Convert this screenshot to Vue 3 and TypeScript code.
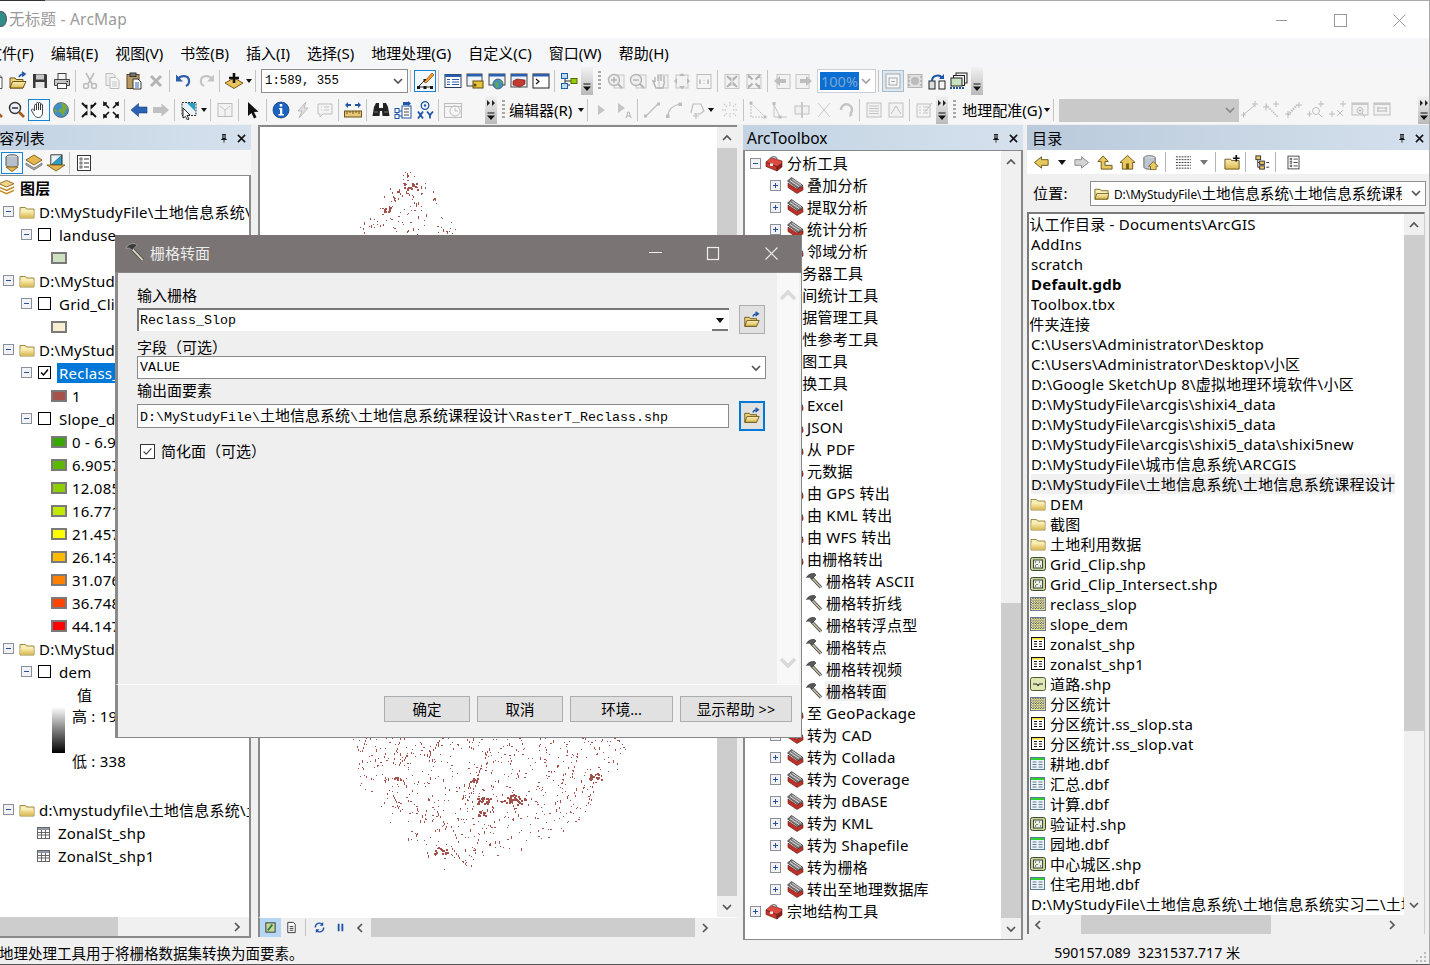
<script setup lang="ts">
type Tok = { k: string; n?: string; w?: number }
const parse = (s: string): Tok[] =>
  s.split(' ').map((t) => {
    if (t === '-') return { k: 'sep' }
    if (t === 'v') return { k: 'arr' }
    if (t === 'H') return { k: 'handle' }
    if (t === 'H2') return { k: 'handle2' }
    if (t === 'G') return { k: 'grip' }
    if (t === 'S') return { k: 'scale' }
    if (t === 'P') return { k: 'pct' }
    if (t === 'E') return { k: 'txt', n: '编辑器(R)' }
    if (t === 'R') return { k: 'txt', n: '地理配准(G)' }
    if (t === 'C') return { k: 'gcombo' }
    if (t[0] === '_') return { k: 'sp', w: Number(t.slice(1)) }
    if (t[0] === '*') return { k: 'hot', n: t.slice(1) }
    if (t[0] === '^') return { k: 'hot2', n: t.slice(1) }
    return { k: 'ic', n: t }
  })

const tb1 = parse('newdoc open save print - cut copy paste del - undo redo - add v - S - *editn - tblwin keywin globewin boxwin cmdwin - model H G dzin dzout dhand dfull d11 - dfin dfout - dback dfwd P - ^dpage dsnap dlink dmulti H')
const tb2 = parse('zin zout *hand globe - fin fout - back fwd - selfeat v - clrsel - pointer - info flash speech - measure - binoc route xy - time _20 H2 G E _4 v - sa sb - la lb lc v _4 ld - ma mb mc md me - ta tb - tc H2 G _2 R v - C ga gb gc gd ge gf gg _24 H2')

const menus = ['文件(F)', '编辑(E)', '视图(V)', '书签(B)', '插入(I)', '选择(S)', '地理处理(G)', '自定义(C)', '窗口(W)', '帮助(H)']

type Toc = { x: string; text?: string; color?: string; on?: boolean; sel?: boolean }
const tocRows: Toc[] = [
  { x: 'root', text: '图层' },
  { x: 'grp', text: 'D:\\MyStudyFile\\土地信息系统\\土地信息系统课程设计' },
  { x: 'lyr', text: 'landuse' },
  { x: 'sw', color: '#cfe2c0' },
  { x: 'grp', text: 'D:\\MyStudyFile\\土地信息系统' },
  { x: 'lyr', text: 'Grid_Clip' },
  { x: 'sw', color: '#f7efcf' },
  { x: 'grp', text: 'D:\\MyStudyFile\\土地信息系统' },
  { x: 'lyr', text: 'Reclass_Slop', on: true, sel: true },
  { x: 'sw', color: '#a5524b', text: '1' },
  { x: 'lyr', text: 'Slope_dem' },
  { x: 'sw', color: '#38a800', text: '0 - 6.905' },
  { x: 'sw', color: '#5cb800', text: '6.9057 - 12.08' },
  { x: 'sw', color: '#8fd100', text: '12.085 - 16.77' },
  { x: 'sw', color: '#c4e800', text: '16.771 - 21.45' },
  { x: 'sw', color: '#ffff00', text: '21.457 - 26.14' },
  { x: 'sw', color: '#ffbb00', text: '26.143 - 31.07' },
  { x: 'sw', color: '#ff8000', text: '31.076 - 36.74' },
  { x: 'sw', color: '#ff4400', text: '36.748 - 44.14' },
  { x: 'sw', color: '#ff0000', text: '44.147 - 78.9' },
  { x: 'grp', text: 'D:\\MyStudyFile\\土地信息系统' },
  { x: 'lyr', text: 'dem' },
  { x: 'val', text: '值' },
  { x: 'ramp' },
  { x: 'blank' },
  { x: 'grp', text: 'd:\\mystudyfile\\土地信息系统\\土地信息系统课程设计' },
  { x: 'tbl', text: 'ZonalSt_shp' },
  { x: 'tbl', text: 'ZonalSt_shp1' },
]

type Tool = { l: number; e?: string; i?: string; text: string; hl?: boolean }
const tools: Tool[] = [
  { l: 0, e: 'minus', i: 'tbox', text: '分析工具' },
  { l: 1, e: 'plus', i: 'tset', text: '叠加分析' },
  { l: 1, e: 'plus', i: 'tset', text: '提取分析' },
  { l: 1, e: 'plus', i: 'tset', text: '统计分析' },
  { l: 1, e: 'plus', i: 'tset', text: '邻域分析' },
  { l: 0, e: 'plus', i: 'tbox', text: '服务器工具' },
  { l: 0, e: 'plus', i: 'tbox', text: '空间统计工具' },
  { l: 0, e: 'plus', i: 'tbox', text: '数据管理工具' },
  { l: 0, e: 'plus', i: 'tbox', text: '线性参考工具' },
  { l: 0, e: 'plus', i: 'tbox', text: '制图工具' },
  { l: 0, e: 'minus', i: 'tbox', text: '转换工具' },
  ...['Excel', 'JSON', '从 PDF', '元数据', '由 GPS 转出', '由 KML 转出', '由 WFS 转出', '由栅格转出'].map((text) => ({ l: 1, e: 'plus', i: 'tset', text })),
  ...['栅格转 ASCII', '栅格转折线', '栅格转浮点型', '栅格转点', '栅格转视频'].map((text) => ({ l: 2, i: 'hammer', text })),
  { l: 2, i: 'hammer', text: '栅格转面', hl: true },
  ...['至 GeoPackage', '转为 CAD', '转为 Collada', '转为 Coverage', '转为 dBASE', '转为 KML', '转为 Shapefile', '转为栅格', '转出至地理数据库'].map((text) => ({ l: 1, e: 'plus', i: 'tset', text })),
  { l: 0, e: 'plus', i: 'tbox', text: '宗地结构工具' },
]

type Cat = { i?: string; text: string; clip?: boolean; bold?: boolean; hl?: boolean }
const cats: Cat[] = [
  { text: '默认工作目录 - Documents\\ArcGIS', clip: true },
  { text: 'AddIns' },
  { text: 'scratch' },
  { text: 'Default.gdb', bold: true },
  { text: 'Toolbox.tbx' },
  { text: '文件夹连接', clip: true },
  { text: 'C:\\Users\\Administrator\\Desktop' },
  { text: 'C:\\Users\\Administrator\\Desktop\\小区' },
  { text: 'D:\\Google SketchUp 8\\虚拟地理环境软件\\小区' },
  { text: 'D:\\MyStudyFile\\arcgis\\shixi4_data' },
  { text: 'D:\\MyStudyFile\\arcgis\\shixi5_data' },
  { text: 'D:\\MyStudyFile\\arcgis\\shixi5_data\\shixi5new' },
  { text: 'D:\\MyStudyFile\\城市信息系统\\ARCGIS' },
  { text: 'D:\\MyStudyFile\\土地信息系统\\土地信息系统课程设计', hl: true },
  { i: 'folder', text: 'DEM' },
  { i: 'folder', text: '截图' },
  { i: 'folder', text: '土地利用数据' },
  { i: 'shp', text: 'Grid_Clip.shp' },
  { i: 'shp', text: 'Grid_Clip_Intersect.shp' },
  { i: 'rast', text: 'reclass_slop' },
  { i: 'rast', text: 'slope_dem' },
  { i: 'tyel', text: 'zonalst_shp' },
  { i: 'tyel', text: 'zonalst_shp1' },
  { i: 'lshp', text: '道路.shp' },
  { i: 'rast', text: '分区统计' },
  { i: 'tyel', text: '分区统计.ss_slop.sta' },
  { i: 'tyel', text: '分区统计.ss_slop.vat' },
  { i: 'tgrn', text: '耕地.dbf' },
  { i: 'tgrn', text: '汇总.dbf' },
  { i: 'tgrn', text: '计算.dbf' },
  { i: 'shp', text: '验证村.shp' },
  { i: 'tgrn', text: '园地.dbf' },
  { i: 'shp', text: '中心城区.shp' },
  { i: 'tgrn', text: '住宅用地.dbf' },
  { text: 'D:\\MyStudyFile\\土地信息系统\\土地信息系统实习二\\土地利用数据' },
]

const catTools = parse('cback v cfwd cup chome cdb - cgrid vg - cfadd - ctree - copts')

function rng(seed: number) {
  return () => {
    seed = (seed + 0x6d2b79f5) | 0
    let t = Math.imul(seed ^ (seed >>> 15), 1 | seed)
    t = (t + Math.imul(t ^ (t >>> 7), 61 | t)) ^ t
    return ((t ^ (t >>> 14)) >>> 0) / 4294967296
  }
}
function inside(p: number[][], x: number, y: number) {
  let c = false
  for (let i = 0, j = p.length - 1; i < p.length; j = i++) {
    if (p[i][1] > y !== p[j][1] > y && x < ((p[j][0] - p[i][0]) * (y - p[i][1])) / (p[j][1] - p[i][1]) + p[i][0]) c = !c
  }
  return c
}
const r = rng(20240611)
let dots = ''
const dot = (x: number, y: number, w: number, h: number) => {
  dots += `M${Math.round(x)} ${Math.round(y)}h${w}v${h}h-${w}z`
}
function scatter(poly: number[][], n: number, streaks: number) {
  const xs = poly.map((q) => q[0])
  const ys = poly.map((q) => q[1])
  const x0 = Math.min(...xs), x1 = Math.max(...xs), y0 = Math.min(...ys), y1 = Math.max(...ys)
  const pick = () => {
    for (;;) {
      const x = x0 + r() * (x1 - x0)
      const y = y0 + r() * (y1 - y0)
      if (inside(poly, x, y)) return [x, y]
    }
  }
  for (let c = 0; c < n; c++) {
    const [x, y] = pick()
    const s = r()
    dot(x, y, s > 0.88 ? 2 : 1, s < 0.08 ? 3 : s < 0.22 ? 2 : 1)
  }
  for (let c = 0; c < streaks; c++) {
    const [x, y] = pick()
    const len = 3 + Math.floor(r() * 7)
    const dx = (r() < 0.7 ? 1 : -1) * (0.6 + r() * 1.4)
    const dy = 1.6 + r() * 2.4
    for (let k = 0; k < len; k++) {
      if (r() < 0.2) continue
      const px = x + dx * k, py = y - k * dy
      if (inside(poly, px, py)) dot(px, py, 1, 2)
    }
  }
}
scatter([[410, 168], [425, 178], [445, 205], [458, 235], [355, 235], [375, 205], [395, 180]], 105, 3)
scatter([[352, 738], [632, 738], [628, 760], [600, 800], [570, 830], [500, 860], [447, 875], [430, 860], [395, 830], [360, 790], [350, 760]], 600, 26)
const blobs = [[410, 187, 7, 16], [386, 210, 5, 8], [483, 802, 7, 22], [510, 800, 9, 24], [480, 815, 5, 14], [595, 778, 6, 16], [473, 782, 4, 10], [440, 852, 7, 14], [520, 803, 6, 10], [397, 780, 3, 5]]
for (const [cx, cy, sp, n] of blobs) {
  for (let i = 0; i < n; i++) dot(cx + (r() - 0.5) * 2 * sp, cy + (r() - 0.5) * sp, 2, 2)
}
</script>

<template>
  <div class="win">
    <svg class="defs" aria-hidden="true">
      <defs>
        <linearGradient id="fg" x1="0" y1="0" x2="0" y2="1"><stop offset="0" stop-color="#fbf0b8" /><stop offset="1" stop-color="#dcb84e" /></linearGradient>
        <linearGradient id="ramp" x1="0" y1="0" x2="0" y2="1"><stop offset="0" stop-color="#fff" /><stop offset="1" stop-color="#000" /></linearGradient>
      </defs>
      <symbol id="cu" viewBox="0 0 12 12"><path d="M2 8l4-4 4 4" fill="none" stroke="#555" stroke-width="1.7" /></symbol>
      <symbol id="cd" viewBox="0 0 12 12"><path d="M2 4l4 4 4-4" fill="none" stroke="#555" stroke-width="1.7" /></symbol>
      <symbol id="cl" viewBox="0 0 12 12"><path d="M8 2L4 6l4 4" fill="none" stroke="#555" stroke-width="1.7" /></symbol>
      <symbol id="cr" viewBox="0 0 12 12"><path d="M4 2l4 4-4 4" fill="none" stroke="#555" stroke-width="1.7" /></symbol>
      <symbol id="plus" viewBox="0 0 11 11"><rect x=".5" y=".5" width="10" height="10" fill="#f0f2f5" stroke="#8a8f98" /><path d="M3 5.500h5M5.500 3v5" stroke="#2a4f9a" /></symbol>
      <symbol id="minus" viewBox="0 0 11 11"><rect x=".5" y=".5" width="10" height="10" fill="#f0f2f5" stroke="#8a8f98" /><path d="M3 5.500h5" stroke="#2a4f9a" /></symbol>

      <symbol id="newdoc" viewBox="0 0 20 20"><path d="M5 2.500h7l4 4v11H5z" fill="#fff" stroke="#555" /><path d="M12 2.500v4h4" fill="none" stroke="#555" /></symbol>
      <symbol id="open" viewBox="0 0 20 20"><path d="M2 7h5l1 1.500h7V17H2z" fill="#f0d47a" stroke="#6a5518" /><path d="M2 17l2.500-6.500H18L15 17z" fill="url(#fg)" stroke="#6a5518" /><path d="M11 6c1-2.500 3-3 4.500-3M14 1l3 2-3 2.500" fill="none" stroke="#1f55a8" stroke-width="1.600" /></symbol>
      <symbol id="save" viewBox="0 0 20 20"><path d="M3 3h13l1 1v13H3z" fill="#3a3a3a" /><rect x="6" y="3.500" width="8" height="5" fill="#c8c8c8" /><rect x="5.500" y="11" width="9" height="6" fill="#e8e8e8" /></symbol>
      <symbol id="print" viewBox="0 0 20 20"><rect x="6" y="2.500" width="8" height="6" fill="#f4f4f4" stroke="#444" /><path d="M2.500 8.500h15v6h-15z" fill="#c5c5c5" stroke="#444" /><rect x="5.500" y="12.500" width="9" height="5" fill="#fff" stroke="#444" /><path d="M14.500 10.500h1.500" stroke="#111" /></symbol>
      <symbol id="cut" viewBox="0 0 20 20"><path d="M6 2l6 11M14 2L8 13" stroke="#bdbdbd" stroke-width="1.600" /><circle cx="6" cy="15" r="2.500" fill="none" stroke="#bdbdbd" stroke-width="1.500" /><circle cx="14" cy="15" r="2.500" fill="none" stroke="#bdbdbd" stroke-width="1.500" /></symbol>
      <symbol id="copy" viewBox="0 0 20 20"><path d="M4 2.500h7l2 2v10H4z" fill="#eee" stroke="#bdbdbd" /><path d="M8 6.500h6l3 3v8H8z" fill="#f6f6f6" stroke="#bdbdbd" /><path d="M10 11h5M10 13h5M10 15h5" stroke="#c8c8c8" /></symbol>
      <symbol id="paste" viewBox="0 0 20 20"><rect x="3" y="3.500" width="12" height="14" fill="#b99a63" stroke="#5a4520" /><rect x="6" y="2" width="6" height="3.500" fill="#777" stroke="#333" /><path d="M9 8h5l3 3v7H9z" fill="#fff" stroke="#333" /><path d="M11 12h4M11 14h4M11 16h4" stroke="#2a63b0" /></symbol>
      <symbol id="del" viewBox="0 0 20 20"><path d="M5 5l10 10M15 5L5 15" stroke="#b4b4b4" stroke-width="3" /></symbol>
      <symbol id="undo" viewBox="0 0 20 20"><path d="M4 8c3-4 10-4 11 1 .4 2.500-1 5-3 6" fill="none" stroke="#2c5fa8" stroke-width="2.200" /><path d="M2 3.500v7h7z" fill="#2c5fa8" /></symbol>
      <symbol id="redo" viewBox="0 0 20 20"><path d="M16 8c-3-4-10-4-11 1-.4 2.500 1 5 3 6" fill="none" stroke="#c4c4c4" stroke-width="2.200" /><path d="M18 3.500v7h-7z" fill="#c4c4c4" /></symbol>
      <symbol id="add" viewBox="0 0 20 20"><path d="M10 7l9 5-9 5.500L1 12z" fill="#e9c35c" stroke="#7a5c1a" /><path d="M10 2v10M5 7h10" stroke="#111" stroke-width="2.600" /></symbol>
      <symbol id="editn" viewBox="0 0 20 20"><path d="M3 16l7-7M3 16h14" stroke="#333" /><path d="M2 15h3v3H2zM8.500 8h3v3h-3zM15 15h3v3h-3z M8.500 15h3v3h-3z" fill="#1a1a1a" /><path d="M9 11l8-9 2 2-8 8z" fill="#f09a30" stroke="#8a4f10" stroke-width=".7" /></symbol>
      <symbol id="tblwin" viewBox="0 0 20 20"><rect x="2" y="3.500" width="16" height="13" fill="#fff" stroke="#2a3a5a" /><rect x="2" y="3.500" width="16" height="2.500" fill="#2a5fb0" /><path d="M4 8.500h3M9 8.500h7M4 11h3M9 11h7M4 13.500h3M9 13.500h7" stroke="#2a5fb0" /></symbol>
      <symbol id="keywin" viewBox="0 0 20 20"><rect x="2" y="3" width="15" height="12" fill="#f0f4fa" stroke="#444" /><rect x="2" y="3" width="15" height="2.500" fill="#2a5fb0" /><rect x="8" y="10" width="10" height="7" fill="#e8c33a" stroke="#5c4a0c" /><circle cx="10" cy="14" r="1.500" fill="#5c4a0c" /></symbol>
      <symbol id="globewin" viewBox="0 0 20 20"><rect x="2" y="3" width="16" height="11" fill="#f0f4fa" stroke="#444" /><rect x="2" y="3" width="16" height="2.500" fill="#2a5fb0" /><circle cx="11" cy="13" r="5" fill="#3f8fc8" stroke="#333" stroke-width=".6" /><path d="M8 11c2 0 3 1 3 3s-2 2-2 3M12 9c2 1 3 2 3 4" fill="#6aaa3c" stroke="#6aaa3c" /></symbol>
      <symbol id="boxwin" viewBox="0 0 20 20"><rect x="2" y="3" width="16" height="13" fill="#f0f4fa" stroke="#444" /><rect x="2" y="3" width="16" height="2.500" fill="#2a5fb0" /><path d="M4 10l4-2 8 1v4l-5 3-7-2z" fill="#c43a30" stroke="#5a1410" stroke-width=".6" /></symbol>
      <symbol id="cmdwin" viewBox="0 0 20 20"><rect x="2" y="3" width="16" height="14" fill="#fff" stroke="#222" /><rect x="2" y="3" width="16" height="2.500" fill="#2a5fb0" /><path d="M5 8l3 2.500L5 13" fill="none" stroke="#111" stroke-width="1.100" /></symbol>
      <symbol id="model" viewBox="0 0 20 20"><path d="M6 6v8h5M6 10h7" stroke="#333" fill="none" /><rect x="2.500" y="2.500" width="6" height="5" fill="#bde" stroke="#1f5fa8" /><rect x="2.500" y="12.500" width="6" height="5" fill="#bde" stroke="#1f5fa8" /><rect x="12" y="7.500" width="6" height="5" fill="#9c0" stroke="#4a7000" /></symbol>

      <symbol id="dzin" viewBox="0 0 20 20"><rect x="8" y="4" width="10" height="13" fill="#f2f2f2" stroke="#c6c6c6" /><circle cx="8" cy="9" r="5.500" fill="#eee" stroke="#b4b4b4" stroke-width="1.400" /><path d="M5 9h6M8 6v6" stroke="#b4b4b4" stroke-width="1.400" /><path d="M12 13l4 4" stroke="#b4b4b4" stroke-width="2" /></symbol>
      <symbol id="dzout" viewBox="0 0 20 20"><rect x="8" y="4" width="10" height="13" fill="#f2f2f2" stroke="#c6c6c6" /><circle cx="8" cy="9" r="5.500" fill="#eee" stroke="#b4b4b4" stroke-width="1.400" /><path d="M5 9h6" stroke="#b4b4b4" stroke-width="1.400" /><path d="M12 13l4 4" stroke="#b4b4b4" stroke-width="2" /></symbol>
      <symbol id="dhand" viewBox="0 0 20 20"><rect x="9" y="4" width="9" height="13" fill="#f2f2f2" stroke="#c6c6c6" /><path d="M5 11V6M8 10V3.500M11 10V3.500M14 11V5M5 11l-2-1 3 7h7l1.500-6" fill="none" stroke="#b4b4b4" stroke-width="1.400" /></symbol>
      <symbol id="dfull" viewBox="0 0 20 20"><rect x="4" y="4" width="12" height="13" fill="#f2f2f2" stroke="#c6c6c6" /><path d="M10 2l3 3H7zM10 18l3-3H7zM2 10l3-3v6zM18 10l-3-3v6z" fill="#b8b8b8" /></symbol>
      <symbol id="d11" viewBox="0 0 20 20"><rect x="3" y="3.500" width="14" height="14" fill="#f4f4f4" stroke="#bdbdbd" /><path d="M6 13V8.500M14 13V8.500M10 9.500v.5M10 12v.5" stroke="#aaa" stroke-width="1.300" /></symbol>
      <symbol id="dfin" viewBox="0 0 20 20"><rect x="3" y="3.500" width="14" height="14" fill="#f2f2f2" stroke="#c6c6c6" /><path d="M5 5l3.500 3.500v-2M5 16l3.500-3.500v2M15 5l-3.500 3.500v-2M15 16l-3.500-3.500v2" fill="none" stroke="#b0b0b0" stroke-width="1.800" /></symbol>
      <symbol id="dfout" viewBox="0 0 20 20"><rect x="3" y="3.500" width="14" height="14" fill="#f2f2f2" stroke="#c6c6c6" /><path d="M8.500 8.500L5 5v2M8.500 12.500L5 16v-2M11.500 8.500L15 5v2M11.500 12.500L15 16v-2" fill="none" stroke="#b0b0b0" stroke-width="1.800" /></symbol>
      <symbol id="dback" viewBox="0 0 20 20"><rect x="5" y="3.500" width="13" height="14" fill="#f2f2f2" stroke="#c6c6c6" /><path d="M2 10l6-5v3h6v4H8v3z" fill="#bdbdbd" /></symbol>
      <symbol id="dfwd" viewBox="0 0 20 20"><rect x="2" y="3.500" width="13" height="14" fill="#f2f2f2" stroke="#c6c6c6" /><path d="M18 10l-6-5v3H6v4h6v3z" fill="#bdbdbd" /></symbol>
      <symbol id="dpage" viewBox="0 0 20 20"><rect x="3" y="3" width="14" height="14" fill="#f4f7fa" stroke="#a8a8a8" /><rect x="6" y="7" width="8" height="7" fill="none" stroke="#a8a8a8" /><path d="M8 10.500h4" stroke="#a8a8a8" /></symbol>
      <symbol id="dsnap" viewBox="0 0 20 20"><rect x="3" y="3.500" width="14" height="13" fill="#e0e0e0" stroke="#b4b4b4" /><circle cx="10" cy="10" r="4" fill="#bbb" /><path d="M3 6h2M3 10h2M3 14h2M15 6h2M15 10h2M15 14h2" stroke="#999" /></symbol>
      <symbol id="dlink" viewBox="0 0 20 20"><rect x="2" y="10" width="6" height="8" fill="#ddd" stroke="#222" /><rect x="12" y="10" width="6" height="8" fill="#f4f4f4" stroke="#222" /><path d="M5 10c0-6 8-7 10-3" fill="none" stroke="#1f55a8" stroke-width="2" /><path d="M12 8h5V3z" fill="#1f55a8" /></symbol>
      <symbol id="dmulti" viewBox="0 0 20 20"><rect x="7" y="2" width="11" height="10" fill="#eee" stroke="#222" /><rect x="4.500" y="4.500" width="11" height="10" fill="#f6f6f6" stroke="#222" /><rect x="2" y="7" width="11" height="8" fill="#c8e4c0" stroke="#222" /><path d="M1 17h14" stroke="#1f55a8" stroke-width="2" stroke-dasharray="2 1" /></symbol>

      <symbol id="zin" viewBox="0 0 20 20"><circle cx="8" cy="8" r="5.500" fill="#eaf2fb" stroke="#333" stroke-width="1.400" /><path d="M5 8h6M8 5v6" stroke="#222" stroke-width="1.400" /><path d="M12 12l5 5" stroke="#a65c1f" stroke-width="2.600" /></symbol>
      <symbol id="zout" viewBox="0 0 20 20"><circle cx="8" cy="8" r="5.500" fill="#eaf2fb" stroke="#333" stroke-width="1.400" /><path d="M5 8h6" stroke="#222" stroke-width="1.400" /><path d="M12 12l5 5" stroke="#a65c1f" stroke-width="2.600" /></symbol>
      <symbol id="hand" viewBox="0 0 20 20"><path d="M5.500 11V5.500a1 1 0 0 1 2 0V10V3.500a1 1 0 0 1 2 0V10V3.500a1 1 0 0 1 2 0V10V5a1 1 0 0 1 2 0v8c0 2.500-1.500 4.500-4 4.500-2.500 0-3.500-1-5-3.500L2.500 10.500c-.6-1.200.9-2 1.800-1z" fill="#fff" stroke="#333" stroke-width=".9" /></symbol>
      <symbol id="globe" viewBox="0 0 20 20"><circle cx="10" cy="10" r="7.500" fill="#3f8fc8" stroke="#555" stroke-width=".7" /><path d="M10 3c3 0 6 2 6.500 5-1 1-3 4-3 6l-2 2-1-3-3-1 1-3 3-1zM3 9c2 0 3 1 3 3l-2 1z" fill="#7aa83c" /></symbol>
      <symbol id="fin" viewBox="0 0 20 20"><path d="M3 3l4.500 4.500V4.800M3 17l4.500-4.500v2.700M17 3l-4.500 4.500V4.800M17 17l-4.500-4.500v2.700" fill="none" stroke="#111" stroke-width="1.900" /></symbol>
      <symbol id="fout" viewBox="0 0 20 20"><path d="M8 8L3 3v3M3 3h3M8 12l-5 5v-3M3 17h3M12 8l5-5v3M17 3h-3M12 12l5 5v-3M17 17h-3" fill="none" stroke="#111" stroke-width="1.600" /></symbol>
      <symbol id="back" viewBox="0 0 20 20"><path d="M2 10l7.500-6.500V7H18v6H9.500v3.500z" fill="#2c62b5" stroke="#1c3f78" stroke-width=".6" /></symbol>
      <symbol id="fwd" viewBox="0 0 20 20"><path d="M18 10l-7.500-6.500V7H2v6h8.500v3.500z" fill="#c0c0c0" /></symbol>
      <symbol id="selfeat" viewBox="0 0 20 20"><rect x="3" y="2.500" width="14" height="13" fill="#e8f2f8" stroke="#333" stroke-dasharray="2 1" /><path d="M8 3l8 0 0 8z" fill="#2aa0c8" /><path d="M4 8l7 7-3 .5 2 3.500-1.500 1-2-3.500L4 18z" fill="#fff" stroke="#111" stroke-width=".9" /></symbol>
      <symbol id="clrsel" viewBox="0 0 20 20"><rect x="3" y="3.500" width="14" height="13" fill="#f2f2f2" stroke="#bcbcbc" /><path d="M5 6l5 4 5-4M10 10v6" fill="none" stroke="#c4c4c4" /></symbol>
      <symbol id="pointer" viewBox="0 0 20 20"><path d="M5 2v14l3.500-3 2.500 5.500 2.500-1.200L11 12l4.500-.3z" fill="#111" /></symbol>
      <symbol id="info" viewBox="0 0 20 20"><circle cx="10" cy="10" r="8" fill="#1c63c0" stroke="#0c3570" stroke-width=".7" /><rect x="8.700" y="4" width="2.600" height="2.600" fill="#fff" /><path d="M8 8h3.300v6H13v1.500H7.500V14H9V9.500H8z" fill="#fff" /></symbol>
      <symbol id="flash" viewBox="0 0 20 20"><path d="M13 2L5 11h4l-3 7 9-10h-4z" fill="#e0e0e0" stroke="#bdbdbd" /></symbol>
      <symbol id="speech" viewBox="0 0 20 20"><path d="M3 4h14v10H8l-3 3v-3H3z" fill="#f4f4f4" stroke="#bdbdbd" /><path d="M6 7h1M9 7h5M6 10h1M9 10h5" stroke="#c4c4c4" /></symbol>
      <symbol id="measure" viewBox="0 0 20 20"><path d="M2 5l3-3v2h3v2H5v2zM18 5l-3-3v2h-3v2h3v2z" fill="#1f55a8" /><rect x="1.500" y="11" width="17" height="6" fill="#e8c878" stroke="#6a5518" /><path d="M4 11v3M7 11v2M10 11v3M13 11v2M16 11v3" stroke="#6a5518" /></symbol>
      <symbol id="binoc" viewBox="0 0 20 20"><path d="M3 7l2-4h3v5h4V3h3l2 4 1.500 9h-7l-.5-5H9l-.5 5h-7z" fill="#222" /><path d="M3 12h4M13 12h4" stroke="#777" /></symbol>
      <symbol id="route" viewBox="0 0 20 20"><path d="M4 10v6h5M4 11h8" stroke="#1f55a8" fill="none" /><rect x="2" y="8.500" width="4" height="4" fill="#fff" stroke="#1f55a8" /><rect x="2" y="14.500" width="4" height="4" fill="#fff" stroke="#1f55a8" /><rect x="9" y="6" width="9" height="12" fill="#fff" stroke="#1f55a8" /><path d="M11 9h5M11 12h5M11 15h5" stroke="#444" /><path d="M10 2h5v-1l3 2.500-3 2.500V5h-5z" fill="#1f55a8" /></symbol>
      <symbol id="xy" viewBox="0 0 20 20"><circle cx="10" cy="5.500" r="3.800" fill="none" stroke="#1f55a8" stroke-width="1.300" /><circle cx="10" cy="5.500" r="1.200" fill="#1f55a8" /><path d="M3 11.500l5 7M8 11.500l-5 7M12 11.500l3 3.500 3-3.500M15 15v3.500" fill="none" stroke="#1f55a8" stroke-width="1.800" /></symbol>
      <symbol id="time" viewBox="0 0 20 20"><rect x="1.500" y="3.500" width="17" height="14" fill="#f4f4f4" stroke="#bdbdbd" /><circle cx="12" cy="11" r="5" fill="#f8f8f8" stroke="#bdbdbd" /><path d="M12 8v3h3M2 6.500h16" stroke="#bdbdbd" fill="none" /></symbol>

      <symbol id="sa" viewBox="0 0 20 20"><path d="M6 5v10l7-5z" fill="#c4c4c4" /></symbol>
      <symbol id="sb" viewBox="0 0 20 20"><path d="M4 3v10l7-5z" fill="#c4c4c4" /><path d="M12 18l2-6h1l2 6M13 16h3" fill="none" stroke="#b0b0b0" /></symbol>
      <symbol id="la" viewBox="0 0 20 20"><path d="M4 16L16 4" stroke="#bdbdbd" stroke-width="1.200" /><rect x="2" y="14.500" width="3" height="3" fill="#bdbdbd" /><rect x="15" y="2.500" width="3" height="3" fill="#bdbdbd" /></symbol>
      <symbol id="lb" viewBox="0 0 20 20"><path d="M4 16c0-6 5-11 12-12" fill="none" stroke="#bdbdbd" stroke-width="1.200" /><rect x="2" y="14.500" width="3.500" height="3.500" fill="#bdbdbd" /><rect x="14.500" y="2.500" width="3.500" height="3.500" fill="#bdbdbd" /></symbol>
      <symbol id="lc" viewBox="0 0 20 20"><path d="M5 13L7 4h8l3 7-4 3H8" fill="none" stroke="#bdbdbd" stroke-width="1.200" /><path d="M7 16h6M10 13v6" stroke="#bdbdbd" /></symbol>
      <symbol id="ld" viewBox="0 0 20 20"><path d="M10 2v5M10 13v5M2 10h5M13 10h5M4 4l3 3M16 4l-3 3M4 16l3-3M16 16l-3-3" stroke="#cdcdcd" stroke-width="1.400" stroke-dasharray="1.500 1" /></symbol>
      <symbol id="ma" viewBox="0 0 20 20"><path d="M3 3l14 14M3 3v14h14" fill="none" stroke="#c0c0c0" stroke-dasharray="2 1" /><rect x="1.500" y="1.500" width="3" height="3" fill="#bdbdbd" /><rect x="15.500" y="15.500" width="3" height="3" fill="#bdbdbd" /></symbol>
      <symbol id="mb" viewBox="0 0 20 20"><path d="M4 3v14M4 5l6 12M4 17h13" fill="none" stroke="#c4c4c4" /><rect x="2.500" y="2" width="3" height="3" fill="#bdbdbd" /><rect x="8.500" y="15.500" width="3" height="3" fill="#bdbdbd" /></symbol>
      <symbol id="mc" viewBox="0 0 20 20"><rect x="3" y="6" width="14" height="8" fill="#f0f0f0" stroke="#c0c0c0" /><path d="M10 2v16" stroke="#c0c0c0" stroke-width="1.600" /></symbol>
      <symbol id="md" viewBox="0 0 20 20"><path d="M4 17L16 3M4 3l12 14" stroke="#c8c8c8" /></symbol>
      <symbol id="me" viewBox="0 0 20 20"><path d="M5 10a5.500 5.500 0 1 1 9 4" fill="none" stroke="#c4c4c4" stroke-width="2.400" /><path d="M13 17l1-4 3 2z" fill="#c4c4c4" /></symbol>
      <symbol id="ta" viewBox="0 0 20 20"><rect x="3" y="3" width="14" height="14" fill="#f2f2f2" stroke="#c0c0c0" /><path d="M5 6h10M5 8.500h10M5 11h10M5 13.500h10" stroke="#c4c4c4" /></symbol>
      <symbol id="tb" viewBox="0 0 20 20"><rect x="3" y="3" width="14" height="14" fill="#f2f2f2" stroke="#c0c0c0" /><path d="M5 14l5-8 5 8" fill="none" stroke="#bdbdbd" /></symbol>
      <symbol id="tc" viewBox="0 0 20 20"><rect x="3" y="4" width="13" height="13" fill="#f4f4f4" stroke="#c0c0c0" /><path d="M5 7h2M9 7h5M5 10h2M9 10h5M5 13h2M9 13h5M11 12l7-9" stroke="#c4c4c4" /></symbol>
      <symbol id="ga" viewBox="0 0 20 20"><path d="M3 15L15 5M1 15h5M3.500 12v5.500M12 4h6M15 1v6" stroke="#bdbdbd" /></symbol>
      <symbol id="gb" viewBox="0 0 20 20"><path d="M4 5l12 12" stroke="#c8c8c8" stroke-width="2" stroke-dasharray="1.500 1" /><path d="M1 7h6M4 3.500v7M11 4h6M14 1v6" stroke="#bdbdbd" /></symbol>
      <symbol id="gc" viewBox="0 0 20 20"><path d="M4 15l9-10" stroke="#c0c0c0" stroke-width="2.400" stroke-dasharray="1.500 1" /><path d="M1 14h6M4 11v7M12 5h6M15 2v6" stroke="#bdbdbd" /></symbol>
      <symbol id="gd" viewBox="0 0 20 20"><circle cx="10" cy="11" r="3.500" fill="none" stroke="#c0c0c0" /><path d="M1 14h5M3.500 11.500v5M12 4h6M15 1v6M13 14l3 3" stroke="#bdbdbd" /></symbol>
      <symbol id="ge" viewBox="0 0 20 20"><path d="M1 14h6M4 11v6M12 4h6M15 1v6M9 10l6 6M15 10l-6 6" stroke="#bdbdbd" /></symbol>
      <symbol id="gf" viewBox="0 0 20 20"><rect x="2" y="3" width="16" height="12" fill="#f2f2f2" stroke="#bdbdbd" /><rect x="2" y="3" width="16" height="2" fill="#c8c8c8" /><circle cx="10" cy="10.500" r="3" fill="none" stroke="#bdbdbd" /><path d="M12 13l3 4M8.500 10.500h3M10 9v3" stroke="#bdbdbd" /></symbol>
      <symbol id="gg" viewBox="0 0 20 20"><rect x="2" y="3" width="16" height="12" fill="#f2f2f2" stroke="#bdbdbd" /><rect x="2" y="3" width="16" height="2" fill="#c8c8c8" /><path d="M5 8h10M5 11h10M6 7v5M14 7v5" stroke="#bdbdbd" /></symbol>

      <symbol id="handleglyph" viewBox="0 0 10 10"><path d="M1.500 2h7" stroke="#111" /><path d="M1 4.500h8L5 9z" fill="#111" /></symbol>
      <symbol id="dbl" viewBox="0 0 10 6"><path d="M1 0l3 3-3 3zM6 0l3 3-3 3z" fill="#222" /></symbol>

      <symbol id="layers" viewBox="0 0 18 18"><path d="M9 1.500L17 5 9 8.500 1 5z" fill="#f2d48a" stroke="#8a6a20" /><path d="M1 8.500L9 12l8-3.500M1 12L9 15.500 17 12" fill="none" stroke="#c08a20" stroke-width="1.600" /></symbol>
      <symbol id="tabsrc" viewBox="0 0 20 20"><ellipse cx="10" cy="4" rx="6" ry="2.300" fill="#cdd5df" stroke="#555" /><path d="M4 4v8c0 1.300 3 2.300 6 2.300s6-1 6-2.300V4" fill="#b6c0cc" stroke="#555" /><path d="M4 14h12l-6 4.500z" fill="#e3b652" stroke="#8a6a20" /></symbol>
      <symbol id="tabvis" viewBox="0 0 20 20"><path d="M10 2l8 5-8 5-8-5z" fill="#e3b652" stroke="#8a6a20" /><path d="M2 10l8 5 8-5v2l-8 5-8-5z" fill="#aaa" stroke="#666" stroke-width=".7" /></symbol>
      <symbol id="tabsel" viewBox="0 0 20 20"><rect x="5" y="2" width="11" height="10" fill="#2aa0c8" stroke="#222" /><path d="M5 12L16 2H5z" fill="#e8f2f8" stroke="#222" stroke-width=".5" /><path d="M1 12h18l-9 6z" fill="#e3b652" stroke="#8a6a20" /></symbol>
      <symbol id="tabopt" viewBox="0 0 20 20"><rect x="3.500" y="2.500" width="13" height="15" fill="#fff" stroke="#333" /><rect x="6" y="5" width="2" height="2" fill="#fff" stroke="#333" stroke-width=".7" /><rect x="6" y="9" width="2" height="2" fill="#fff" stroke="#333" stroke-width=".7" /><rect x="6" y="13" width="2" height="2" fill="#fff" stroke="#333" stroke-width=".7" /><path d="M10 6h5M10 10h5M10 14h5" stroke="#333" /></symbol>
      <symbol id="pin" viewBox="0 0 10 12"><path d="M2.500 1h5v1H7v4.500l1.500 1v1h-3V12h-1V8.500h-3v-1L3 6.500V2h-.5z" fill="#111" /><path d="M5 2v4" stroke="#fff" /></symbol>
      <symbol id="x" viewBox="0 0 10 10"><path d="M1 1l8 8M9 1L1 9" stroke="#111" stroke-width="1.700" /></symbol>

      <symbol id="tbox" viewBox="0 0 18 18"><path d="M1 8l11 4.500V17L1 12.500z" fill="#c8362c" stroke="#5e1510" stroke-width=".6" /><path d="M12 12.500L17 9v4l-5 4z" fill="#8e2018" stroke="#5e1510" stroke-width=".6" /><path d="M1 8l5-4.500L17 7v2l-5 3.500z" fill="#dd4a40" stroke="#5e1510" stroke-width=".6" /><path d="M6 4.500c1-2.500 5-2.500 6 .5" fill="none" stroke="#777" stroke-width="1.300" /><rect x="5" y="9.500" width="3" height="2.500" fill="#eee" /></symbol>
      <symbol id="tset" viewBox="0 0 18 18"><path d="M2 7l9 6 6-2.500V14l-6 3.500-9-6z" fill="#bb3128" stroke="#5e1510" stroke-width=".6" /><path d="M1.500 5L5.500 1.500 17 9.500l-5 3z" fill="#7d7d7d" stroke="#2a2a2a" stroke-width=".7" /><path d="M4 4.500l9 6M6.200 3.200l9 6" stroke="#dcdcdc" /></symbol>
      <symbol id="hammer" viewBox="0 0 18 18"><path d="M6.500 5.500L16 15.500" stroke="#3c3c3c" stroke-width="3.200" /><path d="M6.500 5.500L16 15.500" stroke="#c8bfa8" stroke-width="1.700" /><path d="M1.500 5.500C3 2.500 6 1 9.500 1.500L11 3 7 7 5 5.500C4 5 3 5 1.500 5.500z" fill="#5a5a5a" stroke="#222" stroke-width=".6" /></symbol>
      <symbol id="hamdlg" viewBox="0 0 18 18"><path d="M6.500 5.500L16 15.500" stroke="#4a4a4a" stroke-width="3" /><path d="M6.500 5.500L16 15.500" stroke="#ddd4bd" stroke-width="1.600" /><path d="M1.500 5.500C3 2.500 6 1 9.500 1.500L11 3 7 7 5 5.500C4 5 3 5 1.500 5.500z" fill="#3c3c3c" stroke="#bbb" stroke-width=".5" /></symbol>
      <symbol id="folder" viewBox="0 0 16 16"><path d="M1 3.500h5.500l1 1.500h7.500v9H1z" fill="#f8eeb8" stroke="#9a8a45" /><rect x="1.500" y="7" width="13" height="6.500" fill="url(#fg)" /></symbol>
      <symbol id="folderopen2" viewBox="0 0 16 16"><path d="M1 3.500h5.500l1 1.500h7.500v9H1z" fill="#f8eeb8" stroke="#7a6a25" /><path d="M1 14l2-6h13l-2 6z" fill="url(#fg)" stroke="#7a6a25" /></symbol>
      <symbol id="shp" viewBox="0 0 16 16"><rect x=".5" y="1.500" width="15" height="13" rx="2" fill="#c4d49a" stroke="#3f4c24" /><rect x="3.500" y="4" width="9" height="8" fill="#e8eee0" stroke="#444" /><path d="M5 6h1M9 6h1M6.500 8.500h1M10 10h1M5 10h1" stroke="#222" /></symbol>
      <symbol id="rast" viewBox="0 0 16 16"><rect x=".5" y="1.500" width="15" height="13" fill="#ece08c" stroke="#6a7a8e" /><path d="M3 2v12M5.500 2v12M8 2v12M10.500 2v12M13 2v12" stroke="#46566e" stroke-width="1.300" stroke-dasharray="1 1.500" /><path d="M1 4h14M1 6.500h14M1 9h14M1 11.500h14" stroke="#5c6c84" stroke-dasharray="1 1.500" /></symbol>
      <symbol id="tyel" viewBox="0 0 16 16"><rect x="1.500" y="1.500" width="13" height="12" fill="#fff" stroke="#111" /><rect x="2" y="2" width="12" height="1.600" fill="#f2e33a" /><path d="M4 5.500h3M9 5.500h3M4 8h3M9 8h3M4 10.500h3M9 10.500h3" stroke="#111" /></symbol>
      <symbol id="tgrn" viewBox="0 0 16 16"><rect x=".5" y="1.500" width="14" height="12" fill="#eef3f8" stroke="#5a7a96" /><rect x="1" y="2" width="13" height="2" fill="#2ed02e" /><path d="M2.500 6h4M8.500 6h4M2.500 8.500h4M8.500 8.500h4M2.500 11h4M8.500 11h4" stroke="#5a7a96" /></symbol>
      <symbol id="lshp" viewBox="0 0 16 16"><rect x=".5" y="1.500" width="15" height="13" rx="2" fill="#dfe8b4" stroke="#4c5a2c" /><path d="M3 8h4l1 2 1-2h4" fill="none" stroke="#222" /></symbol>
      <symbol id="ttbl" viewBox="0 0 14 14"><rect x=".5" y="1.500" width="12" height="11" fill="#fff" stroke="#666" /><rect x="1" y="2" width="11" height="2" fill="#8f98a5" /><path d="M1 6.500h11M1 9h11M4.500 4v8M8.500 4v8" stroke="#666" /></symbol>

      <symbol id="cback" viewBox="0 0 18 18"><path d="M1.500 9L9 3v3h7v6H9v3z" fill="#e8c860" stroke="#6a5518" /></symbol>
      <symbol id="cfwd" viewBox="0 0 18 18"><path d="M16.500 9L9 3v3H2v6h7v3z" fill="#d4d4d4" stroke="#888" /></symbol>
      <symbol id="cup" viewBox="0 0 18 18"><path d="M7.500 2L2 8h3.500v8H17v-4H9.500V8H13z" fill="#e8c860" stroke="#6a5518" /></symbol>
      <symbol id="chome" viewBox="0 0 18 18"><path d="M9 1.500L1 9h2.500v7h11V9H17z" fill="#e8c860" stroke="#6a5518" /><rect x="7.500" y="10" width="3" height="6" fill="#7a5a1c" /></symbol>
      <symbol id="cdb" viewBox="0 0 18 18"><ellipse cx="8" cy="4" rx="6" ry="2.200" fill="#d4dbe4" stroke="#666" /><path d="M2 4v10c0 1.200 3 2.200 6 2.200S14 15 14 14V4" fill="#bcc5d0" stroke="#666" /><path d="M12 8l-5 5h2v3.500h6V13h2z" fill="#e8c860" stroke="#6a5518" stroke-width=".8" /></symbol>
      <symbol id="cgrid" viewBox="0 0 18 18"><path d="M1 3h16M1 6h16M1 9h16M1 12h16M1 15h16" stroke="#333" stroke-dasharray="2 1" /></symbol>
      <symbol id="cfadd" viewBox="0 0 18 18"><path d="M1 5.500h6l1 1.500h8v9H1z" fill="url(#fg)" stroke="#6a5518" /><path d="M13 1v7M9.500 4.500h7" stroke="#111" stroke-width="1.800" /></symbol>
      <symbol id="ctree" viewBox="0 0 18 18"><rect x="2" y="2" width="5" height="4" fill="#e8c860" stroke="#333" /><rect x="6" y="7.500" width="5" height="3.500" fill="#e8c860" stroke="#333" /><rect x="6" y="12.500" width="5" height="3.500" fill="#e8c860" stroke="#333" /><path d="M4 6v8h2M4 9h2M13 9h3M13 14h3" stroke="#333" fill="none" /></symbol>
    </svg>

    <div class="topline"><i class="topdark"></i></div>
    <header class="titlebar">
      <span class="appglobe"></span>
      <span class="apptitle">无标题 - ArcMap</span>
      <span class="wbtns">
        <svg class="wb" viewBox="0 0 59 37"><path d="M24 19.500h11" stroke="#999" /></svg>
        <svg class="wb" viewBox="0 0 59 37"><rect x="23.500" y="13.500" width="12" height="12" fill="none" stroke="#999" /></svg>
        <svg class="wb" viewBox="0 0 59 37"><path d="M23.500 13.500l12 12M35.500 13.500l-12 12" stroke="#999" /></svg>
      </span>
    </header>

    <nav class="menubar">
      <span v-for="m in menus" :key="m" class="menu">{{ m }}</span>
    </nav>

    <div class="tbrow row1">
      <template v-for="(t, i) in tb1" :key="i">
        <span v-if="t.k === 'sep'" class="sep"></span>
        <span v-else-if="t.k === 'arr'" class="arr"></span>
        <span v-else-if="t.k === 'handle'" class="handle"><svg class="hg"><use href="#handleglyph" /></svg></span>
        <span v-else-if="t.k === 'grip'" class="grip"></span>
        <span v-else-if="t.k === 'scale'" class="scale"><span>1:589, 355</span><svg class="cv"><use href="#cd" /></svg></span>
        <span v-else-if="t.k === 'pct'" class="pct"><b>100%</b><svg class="cv light"><use href="#cd" /></svg></span>
        <span v-else class="btn" :class="{ hot: t.k === 'hot', hot2: t.k === 'hot2' }"><svg class="ic"><use :href="'#' + t.n" /></svg></span>
      </template>
    </div>
    <div class="tbrow row2">
      <template v-for="(t, i) in tb2" :key="i">
        <span v-if="t.k === 'sep'" class="sep"></span>
        <span v-else-if="t.k === 'arr'" class="arr"></span>
        <span v-else-if="t.k === 'sp'" class="spc" :style="{ width: t.w + 'px' }"></span>
        <span v-else-if="t.k === 'handle2'" class="handle h2"><svg class="hd"><use href="#dbl" /></svg><svg class="hg"><use href="#handleglyph" /></svg></span>
        <span v-else-if="t.k === 'grip'" class="grip"></span>
        <span v-else-if="t.k === 'txt'" class="tbtxt">{{ t.n }}</span>
        <span v-else-if="t.k === 'gcombo'" class="gcombo"><svg class="cv light"><use href="#cd" /></svg></span>
        <span v-else class="btn" :class="{ hot: t.k === 'hot' }"><svg class="ic"><use :href="'#' + t.n" /></svg></span>
      </template>
    </div>

    <main class="docks">
      <section class="toc">
        <div class="ptitle"><span class="cliptitle">内容列表</span><span class="pctl"><svg class="pinx"><use href="#pin" /></svg><svg class="closex"><use href="#x" /></svg></span></div>
        <div class="toctabs">
          <span class="btn tab hot"><svg class="ic"><use href="#tabsrc" /></svg></span>
          <span class="btn tab"><svg class="ic"><use href="#tabvis" /></svg></span>
          <span class="btn tab"><svg class="ic"><use href="#tabsel" /></svg></span>
          <span class="sep"></span>
          <span class="btn tab"><svg class="ic"><use href="#tabopt" /></svg></span>
        </div>
        <div class="toclist">
          <div class="tocscroll">
            <template v-for="(r2, i) in tocRows" :key="i">
              <div v-if="r2.x === 'ramp'" class="ramp">
                <svg class="rampbar" preserveAspectRatio="none" viewBox="0 0 1 1"><rect width="1" height="1" fill="url(#ramp)" /></svg>
                <div class="ramptxt"><span>高 : 1983</span><span>低 : 338</span></div>
              </div>
              <div v-else class="trow" :class="r2.x">
                <svg v-if="r2.x === 'root'" class="t-lay"><use href="#layers" /></svg>
                <svg v-if="r2.x === 'grp' || r2.x === 'lyr'" class="exp"><use href="#minus" /></svg>
                <svg v-if="r2.x === 'grp'" class="t-fold"><use href="#folder" /></svg>
                <span v-if="r2.x === 'lyr'" class="chk"><svg v-if="r2.on" viewBox="0 0 11 11"><path d="M2 5.500l2.500 2.500L9 2.500" fill="none" stroke="#000" stroke-width="1.400" /></svg></span>
                <span v-if="r2.x === 'sw'" class="swatch" :style="{ background: r2.color }"></span>
                <svg v-if="r2.x === 'tbl'" class="t-tbl"><use href="#ttbl" /></svg>
                <span class="ttext" :class="{ picked: r2.sel }">{{ r2.text }}</span>
              </div>
            </template>
          </div>
          <div class="hbar tochbar"><i class="thumb t1"></i><svg class="chev cright"><use href="#cr" /></svg></div>
        </div>
      </section>

      <section class="map">
        <div class="mapmain">
          <div class="canvas">
            <svg class="dots" viewBox="260 128 457 791" preserveAspectRatio="none"><path :d="dots" fill="#a2504a" /></svg>
          </div>
          <div class="vbar mv"><svg class="chev"><use href="#cu" /></svg><i class="thumb"></i><svg class="chev"><use href="#cd" /></svg></div>
        </div>
        <div class="mapbar">
          <span class="mb on"><svg viewBox="0 0 14 14"><rect x="2" y="2" width="10" height="10" fill="#c8d89a" stroke="#333" /><path d="M4 10l5-6" stroke="#2d7a3c" stroke-width="2" /></svg></span>
          <span class="mb"><svg viewBox="0 0 14 14"><path d="M3 1.500h6l2 2v9H3z" fill="#fff" stroke="#333" /><path d="M5 6h4M5 8h4M5 10h4" stroke="#333" /></svg></span>
          <span class="sep"></span>
          <span class="mb"><svg viewBox="0 0 14 14"><path d="M2.500 7a4.500 4.500 0 0 1 8-3M11.500 7a4.500 4.500 0 0 1-8 3" fill="none" stroke="#1f55a8" stroke-width="1.500" /><path d="M11 1v4H7zM3 13V9h4z" fill="#1f55a8" /></svg></span>
          <span class="mb"><svg viewBox="0 0 14 14"><path d="M4 3h2v8H4zM8 3h2v8H8z" fill="#1f55a8" /></svg></span>
          <svg class="chev ml"><use href="#cl" /></svg>
          <span class="mtrack"><i class="mthumb"></i></span>
          <svg class="chev"><use href="#cr" /></svg>
        </div>
      </section>

      <section class="tools">
        <div class="ptitle"><span class="t2">ArcToolbox</span><span class="pctl"><svg class="pinx"><use href="#pin" /></svg><svg class="closex"><use href="#x" /></svg></span></div>
        <div class="toolbody">
          <div class="toolist">
            <div v-for="(t, i) in tools" :key="i" class="krow" :class="'k' + t.l">
              <svg v-if="t.e" class="exp"><use :href="'#' + t.e" /></svg>
              <svg class="k-ic"><use :href="'#' + t.i" /></svg>
              <span class="ktxt" :class="{ hl: t.hl }">{{ t.text }}</span>
            </div>
          </div>
          <div class="vbar tv"><svg class="chev"><use href="#cu" /></svg><i class="gapthumb"></i><i class="thumb"></i><svg class="chev"><use href="#cd" /></svg></div>
        </div>
      </section>

      <section class="catalog">
        <div class="ptitle pc"><span class="t3">目录</span><span class="pctl"><svg class="pinx"><use href="#pin" /></svg><svg class="closex"><use href="#x" /></svg></span></div>
        <div class="cattb">
          <template v-for="(t, i) in catTools" :key="i">
            <span v-if="t.k === 'sep'" class="sep"></span>
            <span v-else-if="t.k === 'arr'" class="darr"></span>
            <span v-else-if="t.n === 'vg'" class="darr grey"></span>
            <span v-else-if="t.n === 'copts'" class="cbtn"><svg class="cic"><use href="#tabopt" /></svg></span>
            <span v-else class="cbtn" :class="'b-' + t.n"><svg class="cic"><use :href="'#' + t.n" /></svg></span>
          </template>
        </div>
        <div class="catloc">
          <span class="loclbl">位置:</span>
          <span class="locsel"><svg class="locf"><use href="#folderopen2" /></svg><span class="loct">D:\MyStudyFile\<span class="lc">土地信息系统</span>\<span class="lc">土地信息系统课程设计</span></span><svg class="cv"><use href="#cd" /></svg></span>
        </div>
        <div class="catbox">
          <div class="catmain">
            <div class="catlist">
              <div v-for="(c, i) in cats" :key="i" class="crow">
                <svg v-if="c.i" class="c-ic"><use :href="'#' + c.i" /></svg>
                <span class="ctxt" :class="{ clip: c.clip, bold: c.bold, hl: c.hl, plain: !c.i }">{{ c.text }}</span>
              </div>
            </div>
            <div class="vbar cv2"><svg class="chev"><use href="#cu" /></svg><i class="thumb"></i><i class="rest"></i><svg class="chev"><use href="#cd" /></svg></div>
          </div>
          <div class="hbar cath"><svg class="chev"><use href="#cl" /></svg><i class="thumb t3h"></i><svg class="chev"><use href="#cr" /></svg></div>
        </div>
      </section>
    </main>

    <footer class="status">
      <span class="stmsg">地理处理工具用于将栅格数据集转换为面要素。</span>
      <span class="stxy">590157.089&nbsp;&nbsp;3231537.717 米</span>
      <svg class="grip2" viewBox="0 0 14 14"><path d="M10 2h2v2h-2zM6 6h2v2H6zM10 6h2v2h-2zM2 10h2v2H2zM6 10h2v2H6zM10 10h2v2h-2z" fill="#bcbcbc" /></svg>
    </footer>

    <div class="dialog">
      <div class="dtitle">
        <svg class="dham"><use href="#hamdlg" /></svg>
        <span class="dname">栅格转面</span>
        <span class="dctl">
          <svg viewBox="0 0 58 37"><path d="M23 17.500h13" stroke="#eee" /></svg>
          <svg viewBox="0 0 58 37"><rect x="23.500" y="12.500" width="11" height="12" fill="none" stroke="#eee" stroke-width="1.200" /></svg>
          <svg viewBox="0 0 58 37"><path d="M23.500 12.500l12 12M35.500 12.500l-12 12" stroke="#eee" stroke-width="1.100" /></svg>
        </span>
      </div>
      <div class="dbody">
        <div class="dform">
          <div class="dl l1">输入栅格</div>
          <div class="drow r1">
            <div class="inp sunken"><span class="mono">Reclass_Slop</span><span class="ddbtn"><svg viewBox="0 0 10 8"><path d="M1 2h8L5 7z" fill="#111" /></svg></span></div>
            <span class="browse"><svg><use href="#open" /></svg></span>
          </div>
          <div class="dl l2">字段（可选）</div>
          <div class="dsel"><span class="mono">VALUE</span><svg class="cv"><use href="#cd" /></svg></div>
          <div class="dl l3">输出面要素</div>
          <div class="drow r3">
            <div class="inp flat"><span class="mono">D:\MyStudyFile\<span class="mc">土地信息系统</span>\<span class="mc">土地信息系统课程设计</span>\RasterT_Reclass.shp</span></div>
            <span class="browse focus"><svg><use href="#open" /></svg></span>
          </div>
          <div class="dchk">
            <span class="cb"><svg viewBox="0 0 15 15"><path d="M3 7.500l3 3 6-6.500" fill="none" stroke="#444" stroke-width="1.300" /></svg></span>
            <span>简化面（可选）</span>
          </div>
        </div>
        <div class="dside">
          <svg viewBox="0 0 22 20"><path d="M4 14l7-7 7 7" fill="none" stroke="#d9d9d9" stroke-width="3.500" /></svg>
          <svg viewBox="0 0 22 20"><path d="M4 6l7 7 7-7" fill="none" stroke="#d9d9d9" stroke-width="3.500" /></svg>
        </div>
      </div>
      <div class="dfoot">
        <span class="dbtn b1">确定</span>
        <span class="dbtn b1">取消</span>
        <span class="dbtn b2">环境...</span>
        <span class="dbtn b3">显示帮助 &gt;&gt;</span>
      </div>
    </div>
  </div>
</template>

<style scoped>
.win { position: relative; width: 1430px; height: 965px; overflow: hidden; background: #f0f0f0; display: flex; flex-direction: column; font-family: "Noto Sans", "Noto Sans CJK SC", sans-serif; font-size: 15px; line-height: 20px; letter-spacing: .23px; color: #000; box-sizing: border-box; border-bottom: 1px solid #555; border-right: 1px solid #aaa; }
.defs { position: absolute; width: 0; height: 0; }
.topline { height: 1px; background: #aaa; flex: none; }
.topdark { display: block; width: 45px; height: 1px; background: #333; }
.titlebar { height: 37px; flex: none; background: #fff; display: flex; align-items: center; }
.appglobe { width: 10px; height: 14px; margin-left: -5px; margin-bottom: 2px; border-radius: 50%; background: #2f8f88; border: 1px solid #556; }
.apptitle { margin-left: 2px; margin-bottom: 2px; color: #9a9a9a; font-size: 15.500px; }
.wbtns { margin-left: auto; display: flex; }
.wb { width: 59px; height: 37px; display: block; }
.menubar { height: 30px; flex: none; background: #f5f6f7; display: flex; align-items: center; gap: 17px; margin-left: -13px; letter-spacing: 0; white-space: nowrap; }
.tbrow { height: 28px; flex: none; display: flex; align-items: center; background: #f6f6f6; white-space: nowrap; letter-spacing: 0; box-sizing: border-box; }
.row1 { margin-left: -15px; padding-bottom: 2px; }
.row2 { margin-left: -16px; }
.spc { flex: none; display: block; height: 1px; }
.btn { width: 22px; height: 22px; flex: none; display: flex; align-items: center; justify-content: center; box-sizing: border-box; }
.btn.hot { border: 1px solid #1a83d4; background: #f4f9fd; }
.btn.hot2 { background: #dbe8f2; border: 1px solid #a8bccc; }
.ic { width: 20px; height: 20px; display: block; }
.sep { width: 1px; height: 22px; background: #c4c4c4; margin: 0 3px 0 2px; flex: none; }
.arr { width: 8px; flex: none; display: flex; justify-content: center; }
.arr::after { content: ""; border: 3px solid transparent; border-top: 4px solid #111; border-bottom: 0; }
.scale { width: 147px; height: 24px; margin: 0 0 0 2px; box-sizing: border-box; border: 1px solid #8e8e8e; background: #fff; display: flex; align-items: center; padding-left: 3px; font-size: 12.300px; flex: none; font-family: "Liberation Mono", "DejaVu Sans Mono", monospace; }
.cv { width: 12px; height: 12px; margin-left: auto; margin-right: 3px; flex: none; }
.cv.light { opacity: .55; }
.pct { width: 59px; height: 24px; margin: 0 0 0 2px; box-sizing: border-box; border: 1px solid #c9cfd4; background: #fff; display: flex; align-items: center; padding-left: 2px; flex: none; }
.pct b { font-weight: 400; background: #0a6ed2; color: #7ba7d6; font-size: 14.500px; padding: 0 1px; line-height: 18px; }
.handle { width: 12px; height: 28px; margin-left: 1px; flex: none; position: relative; background: linear-gradient(#f2f2f2 0%, #d8d8d8 45%, #b9b9b9 100%); display: flex; flex-direction: column; align-items: center; justify-content: flex-end; padding-bottom: 3px; box-sizing: border-box; }
.hg { width: 10px; height: 10px; }
.hd { width: 10px; height: 6px; margin-bottom: auto; margin-top: 4px; }
.grip { width: 3px; height: 20px; margin: 0 4px 0 5px; flex: none; background: repeating-linear-gradient(#a8a8a8 0 2px, transparent 2px 4px); }
.tbtxt { font-size: 15px; margin-right: 1px; }
.gcombo { width: 180px; height: 23px; margin-left: 2px; background: #c9c9c9; display: flex; align-items: center; flex: none; }

.docks { flex: 1; display: grid; grid-template-columns: 251px 479px 280px 398px; column-gap: 7px; min-height: 0; padding-top: 1px; }
.docks > section { min-width: 0; min-height: 0; display: flex; flex-direction: column; }
.tools { margin-left: -1px; margin-right: 1px; }
.catalog { margin-left: -4px; }
.ptitle { height: 25px; flex: none; box-sizing: border-box; padding-top: 1px; background: linear-gradient(90deg, #c3d3e3, #d5e1ed); display: flex; align-items: center; padding-right: 4px; overflow: hidden; white-space: nowrap; }
.ptitle.pc { background: linear-gradient(90deg, #bacadb, #d4e0ed); }
.cliptitle { margin-left: -16px; }
.t2 { margin-left: 4px; font-size: 15.500px; letter-spacing: 0; }
.t3 { margin-left: 5px; }
.pctl { margin-left: auto; display: flex; align-items: center; gap: 9px; }
.pinx { width: 8px; height: 10px; }
.closex { width: 9px; height: 9px; margin-right: 1px; }
.toctabs { height: 25px; flex: none; background: #f7f7f7; display: flex; align-items: center; padding-left: 1px; }
.toctabs .sep { margin: 0 3px 0 2px; }
.tab .ic { width: 20px; height: 20px; }
.toclist { flex: 1; min-height: 0; background: #fff; border-top: 1px solid #8a8a8a; border-right: 2px solid #8a8a8a; border-bottom: 2px solid #8a8a8a; margin-bottom: 2px; display: flex; flex-direction: column; }
.tocscroll { flex: 1; min-height: 0; overflow: hidden; padding-top: 1px; }
.trow { height: 23px; display: flex; align-items: center; white-space: nowrap; position: relative; }
.exp { width: 11px; height: 11px; flex: none; }
.root { font-weight: 700; margin-top: -1px; margin-bottom: 1px; }
.t-lay { width: 17px; height: 17px; margin-left: -2px; margin-right: 5px; flex: none; }
.grp { padding-left: 3px; }
.t-fold { width: 16px; height: 16px; margin: 0 4px 0 5px; flex: none; }
.lyr { padding-left: 21px; }
.chk { width: 11px; height: 11px; border: 1px solid #000; margin: 0 8px 0 6px; flex: none; background: #fff; }
.chk svg { display: block; width: 11px; height: 11px; }
.sw { padding-left: 51px; }
.swatch { width: 12px; height: 8px; border: 2px solid #7a7a7a; flex: none; margin-right: 5px; }
.picked { background: #0078d7; color: #fff; padding: 0 2px; margin-left: -2px; }
.val { padding-left: 77px; }
.tbl { padding-left: 37px; }
.t-tbl { width: 14px; height: 14px; margin-right: 7px; flex: none; }
.ttext { line-height: 20px; }
.ramp { height: 69px; padding-left: 52px; display: flex; }
.rampbar { width: 13px; height: 46px; flex: none; margin-top: 1px; }
.ramptxt { margin-left: 7px; display: flex; flex-direction: column; gap: 25px; white-space: nowrap; }
.blank { height: 23px; }
.hbar { height: 19px; flex: none; background: #f0f0f0; display: flex; align-items: center; position: relative; }
.thumb { display: block; background: #cdcdcd; }
.t1 { width: 118px; height: 100%; }
.chev { width: 12px; height: 12px; flex: none; }
.cright { margin-left: auto; margin-right: 6px; }

.mapmain { flex: 1; min-height: 0; display: flex; border-left: 2px solid #8a8a8a; border-top: 2px solid #8a8a8a; }
.canvas { flex: 1; min-width: 0; background: #fff; position: relative; }
.dots { display: block; width: 100%; height: 100%; shape-rendering: crispEdges; }
.vbar { width: 20px; flex: none; background: #f0f0f0; display: flex; flex-direction: column; align-items: center; }
.vbar .chev { margin: 5px 0 4px; }
.vbar .thumb { width: 100%; flex: 1; }
.mapbar { height: 19px; flex: none; margin-bottom: 3px; border-left: 2px solid #8a8a8a; border-top: 1px solid #fff; display: flex; align-items: center; background: #f0f0f0; }
.mb { width: 21px; height: 19px; display: flex; align-items: center; justify-content: center; flex: none; }
.mb svg { width: 13px; height: 13px; }
.mb.on { background: #b5d7f3; }
.mapbar .sep { height: 17px; margin: 0 3px 0 3px; }
.ml { margin-left: 3px; }
.mtrack { flex: 1; height: 100%; margin: 0 4px 0 5px; display: block; }
.mthumb { display: block; height: 100%; width: 324px; background: #cdcdcd; }
.mapbar > .chev:last-child { margin-right: 26px; }

.toolbody { flex: 1; min-height: 0; display: flex; background: #fff; border: 1px solid #8a8a8a; border-left: 2px solid #8a8a8a; border-right: 2px solid #8a8a8a; }
.toolist { flex: 1; min-width: 0; overflow: hidden; padding-top: 1px; }
.krow { height: 22px; display: flex; align-items: center; white-space: nowrap; }
.k0 { padding-left: 5px; }
.k0 .k-ic { width: 18px; height: 18px; margin: 0 3px 0 4px; }
.k1 { padding-left: 25px; }
.k1 .k-ic { width: 18px; height: 18px; margin: 0 2px 0 5px; }
.k2 { padding-left: 60px; }
.k2 .k-ic { width: 18px; height: 18px; margin: 0 2px 0 0; }
.k-ic { flex: none; }
.ktxt { padding: 0 2px 0 1px; }
.ktxt.hl { background: #f0f0f0; }
.tv .gapthumb { display: block; flex: 0 0 431px; }

.cattb { height: 24px; flex: none; background: #fff; display: flex; align-items: center; padding-left: 3px; }
.cattb .sep { height: 20px; margin: 0 6px 0 3px; background: #b4b4b4; }
.cbtn { width: 23px; display: flex; justify-content: center; flex: none; }
.b-cfadd, .b-ctree { width: 20px; }
.cic { width: 17px; height: 17px; flex: none; }
.darr { width: 17px; flex: none; display: flex; justify-content: center; }
.darr::after { content: ""; border: 4px solid transparent; border-top: 5px solid #111; border-bottom: 0; }
.darr.grey::after { border-top-color: #777; }
.catloc { height: 38px; flex: none; display: flex; align-items: center; background: #f0f0f0; padding-left: 6px; }
.loclbl { width: 57px; flex: none; }
.locsel { flex: 1; min-width: 0; height: 25px; box-sizing: border-box; border: 1px solid #8e8e8e; background: #fff; display: flex; align-items: center; margin-right: 3px; }
.locf { width: 15px; height: 15px; margin: 0 5px 0 3px; flex: none; }
.loct { flex: 1; min-width: 0; overflow: hidden; white-space: nowrap; font-size: 11.800px; letter-spacing: 0; margin-right: 8px; }
.lc { font-size: 14.600px; }
.catbox { flex: 1; min-height: 0; display: flex; flex-direction: column; margin-right: 4px; margin-bottom: 6px; border-left: 2px solid #7a7a7a; border-top: 2px solid #7a7a7a; border-right: 1px solid #ccc; background: #fff; }
.catmain { flex: 1; min-height: 0; display: flex; }
.catlist { flex: 1; min-width: 0; overflow: hidden; }
.crow { height: 20px; display: flex; align-items: center; white-space: nowrap; }
.c-ic { width: 16px; height: 16px; margin: 0 4px 0 1px; flex: none; }
.ctxt.plain { margin-left: 2px; }
.ctxt.clip { margin-left: -15px; }
.ctxt.bold { font-weight: 700; }
.ctxt.hl { background: #f0f0f0; }
.cv2 .thumb { flex: 0 0 496px; }
.cv2 .rest { flex: 1; display: block; }
.cath { height: 19px; }
.cath .chev { margin-left: 3px; }
.t3h { width: 190px; height: 100%; margin-left: 37px; margin-right: 115px; }
.cath .chev:last-child { margin-left: 0; }

.status { height: 24px; flex: none; display: flex; align-items: center; background: #f0f0f0; white-space: nowrap; position: relative; letter-spacing: 0; padding-top: 1px; box-sizing: border-box; }
.stmsg { margin-left: -1px; font-size: 14.500px; }
.stxy { margin-left: auto; margin-right: 189px; font-size: 14.100px; }
.grip2 { position: absolute; right: 1px; bottom: 0; width: 14px; height: 14px; }

.dialog { position: absolute; left: 115px; top: 235px; width: 687px; height: 503px; box-sizing: border-box; background: #f0f0f0; border-bottom: 1px solid #888; border-right: 1px solid #888; display: flex; flex-direction: column; letter-spacing: 0; }
.dtitle { height: 37px; flex: none; background: #7a7574; display: flex; align-items: center; color: #ececec; }
.dham { width: 21px; height: 21px; margin-left: 9px; margin-bottom: 2px; }
.dname { margin-left: 5px; margin-bottom: 2px; font-size: 15px; }
.dctl { margin-left: auto; display: flex; margin-right: 1px; }
.dctl svg { width: 58px; height: 37px; display: block; }
.dbody { flex: 1; min-height: 0; display: flex; border-left: 3px solid #8a8a8a; border-top: 1px solid #888; }
.dform { flex: 1; min-width: 0; padding-left: 19px; padding-right: 12px; background: #efefef; }
.dl { font-size: 15px; line-height: 20px; }
.l1 { margin-top: 12px; height: 20px; }
.l2 { margin-top: 3px; height: 19px; }
.l3 { height: 22px; line-height: 22px; }
.drow { display: flex; align-items: center; justify-content: space-between; }
.r1 { height: 29px; }
.r3 { height: 30px; }
.inp { width: 592px; box-sizing: border-box; background: #fff; display: flex; align-items: center; }
.sunken { height: 23px; border-top: 2px solid #777; border-left: 2px solid #777; padding-left: 1px; position: relative; }
.ddbtn { width: 16px; height: 21px; margin-left: auto; display: flex; align-items: center; justify-content: center; border-bottom: 2px solid #777; box-sizing: border-box; background: #fff; margin-right: 1px; }
.ddbtn svg { width: 10px; height: 8px; }
.flat { height: 24px; border: 1px solid #8a8a8a; padding-left: 2px; line-height: 18px; }
.mono { font-family: "Liberation Mono", "DejaVu Sans Mono", monospace; font-size: 13.330px; white-space: nowrap; }
.mc { font-family: "Noto Sans CJK SC", sans-serif; font-size: 15px; }
.browse { width: 26px; height: 29px; box-sizing: border-box; border: 1px solid #adadad; background: #e1e1e1; display: flex; align-items: center; justify-content: center; flex: none; }
.browse svg { width: 18px; height: 18px; }
.browse.focus { height: 30px; border: 2px solid #0078d7; }
.dsel { width: 629px; height: 23px; box-sizing: border-box; background: #fff; border: 1px solid #8a8a8a; display: flex; align-items: center; padding-left: 2px; }
.dchk { margin: 10px 0 0 3px; display: flex; align-items: center; font-size: 15px; }
.cb { width: 15px; height: 15px; box-sizing: border-box; border: 1px solid #333; background: #fff; margin-right: 6px; display: block; }
.cb svg { display: block; width: 13px; height: 13px; }
.dside { width: 22px; flex: none; background: #f8f8f8; display: flex; flex-direction: column; justify-content: space-between; padding: 12px 0 11px; margin-right: 2px; box-sizing: content-box; }
.dside svg { width: 22px; height: 20px; display: block; }
.dfoot { height: 53px; flex: none; box-sizing: border-box; background: #f0f0f0; border-top: 1px solid #fff; border-left: 3px solid #8a8a8a; display: flex; align-items: center; justify-content: flex-end; gap: 7px; padding: 0 9px 5px 0; }
.dbtn { height: 26px; box-sizing: border-box; border: 1px solid #adadad; background: #e1e1e1; display: flex; align-items: center; justify-content: center; font-size: 14.500px; }
.b1 { width: 86px; }
.b2 { width: 103px; }
.b3 { width: 112px; }
</style>

<style>
html, body { margin: 0; padding: 0; overflow: hidden; background: #f0f0f0; }
</style>
